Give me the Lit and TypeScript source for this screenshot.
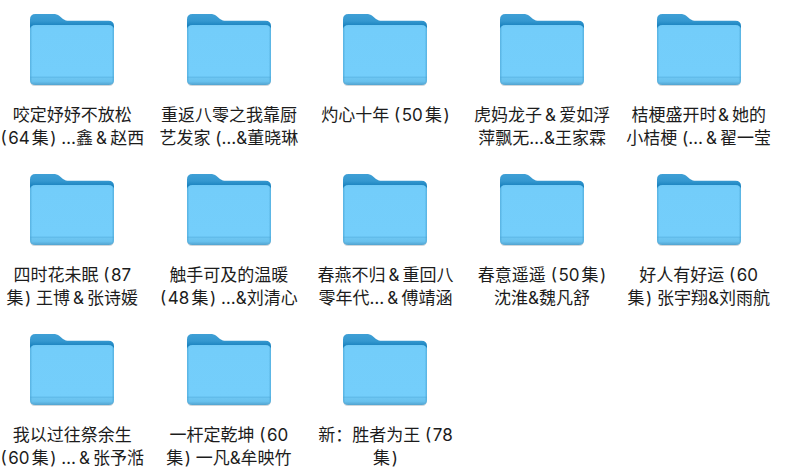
import { LitElement, html, css } from "lit";
import { customElement } from "lit/decorators.js";

const folders: string[][] = [
  ["咬定妤妤不放松", "(\u200a64集\u200a) …鑫\u2009&\u2009赵西"],
  ["重返八零之我靠厨", "艺发家 (…&董晓琳"],
  ["灼心十年 (\u200a50集\u200a)"],
  ["虎妈龙子\u2009&\u2009爱如浮", "萍飘无…&王家霖"],
  ["桔梗盛开时\u200a&\u2009她的", "小桔梗 (…\u2009&\u2009翟一莹"],
  ["四时花未眠 (\u200a87", "集\u200a) 王博\u2009&\u2009张诗媛"],
  ["触手可及的温暖", "(\u200a48集\u200a) …&刘清心"],
  ["春燕不归\u2009&\u2009重回八", "零年代…\u2009&\u2009傅靖涵"],
  ["春意遥遥 (\u200a50集\u200a)", "沈淮&魏凡舒"],
  ["好人有好运 (\u200a60", "集\u200a) 张宇翔&刘雨航"],
  ["我以过往祭余生", "(\u200a60集\u200a) …\u2009&\u2009张予湉"],
  ["一杆定乾坤 (\u200a60", "集\u200a) 一凡&牟映竹"],
  ["新：胜者为王 (\u200a78", "集\u200a)"],
];

@customElement("folder-icon")
export class FolderIcon extends LitElement {
  static styles = css`
    :host {
      display: block;
      height: 76px;
    }
    .icon {
      display: block;
      width: 88px;
      height: 76px;
    }
  `;

  render() {
    return html`<svg class="icon" viewBox="0 0 88 76" aria-hidden="true">
      <defs>
        <linearGradient id="back" x1="0" y1="0" x2="0" y2="1">
          <stop offset="0" stop-color="#3fa0d6" />
          <stop offset="0.12" stop-color="#3598d0" />
          <stop offset="0.2" stop-color="#1c84c0" />
          <stop offset="1" stop-color="#2389c2" />
        </linearGradient>
        <linearGradient id="front" x1="0" y1="0" x2="0" y2="1">
          <stop offset="0" stop-color="#70c9f6" />
          <stop offset="0.05" stop-color="#73cdfa" />
          <stop offset="0.85" stop-color="#74cefb" />
          <stop offset="0.87" stop-color="#5fb9e8" />
          <stop offset="0.89" stop-color="#6dc5f1" />
          <stop offset="0.94" stop-color="#69c1ed" />
          <stop offset="1" stop-color="#51a3d0" />
        </linearGradient>
        <linearGradient id="edge" x1="0" y1="0" x2="1" y2="0">
          <stop offset="0" stop-color="#4aa5d5" stop-opacity="0.7" />
          <stop offset="0.03" stop-color="#4aa5d5" stop-opacity="0" />
          <stop offset="0.97" stop-color="#4aa5d5" stop-opacity="0" />
          <stop offset="1" stop-color="#4aa5d5" stop-opacity="0.7" />
        </linearGradient>
      </defs>
      <path d="M2 68V17q0-5 5-5h74q5 0 5 5v51q0 6-5 6H7q-5 0-5-6z" fill="#8a9aa5" opacity="0.4" />
      <path d="M2 60V7.500Q2 2 7.500 2H25c3 0 4.500.5 6.500 2.100l3.500 2.800c2 1.400 3.500 1.800 6.500 1.800H80.500q5.500 0 5.500 5.500V60z" fill="url(#back)" />
      <path d="M2 18.500q0-5.500 5.500-5.500h73q5.500 0 5.500 5.500V67.500q0 5.500-5.500 5.500h-73Q2 73 2 67.500z" fill="url(#front)" />
      <path d="M2 18.500q0-5.500 5.500-5.500h73q5.500 0 5.500 5.500V67.500q0 5.500-5.500 5.500h-73Q2 73 2 67.500z" fill="url(#edge)" />
    </svg>`;
  }
}

@customElement("app-root")
export class AppRoot extends LitElement {
  static styles = css`
    :host {
      display: block;
      min-height: 100vh;
      background: #fff;
      color: #1c1c1c;
      font: 17px/23px Inter, "Noto Sans CJK SC", sans-serif;
      text-autospace: normal;
    }
    .grid {
      display: grid;
      grid-template-columns: repeat(5, minmax(0, 1fr));
      grid-auto-rows: minmax(148px, auto);
      gap: 12px;
      margin: 0;
      padding: 12px 29px 0 0;
      list-style: none;
    }
    .folder {
      display: flex;
      flex-direction: column;
      align-items: center;
      gap: 16px;
    }
    .name {
      text-align: center;
      white-space: nowrap;
    }
    .line {
      display: block;
    }
  `;

  render() {
    return html`<ul class="grid">
      ${folders.map(
        (lines) => html`<li class="folder">
          <folder-icon></folder-icon>
          <div class="name">${lines.map((line) => html`<span class="line">${line}</span>`)}</div>
        </li>`
      )}
    </ul>`;
  }
}
